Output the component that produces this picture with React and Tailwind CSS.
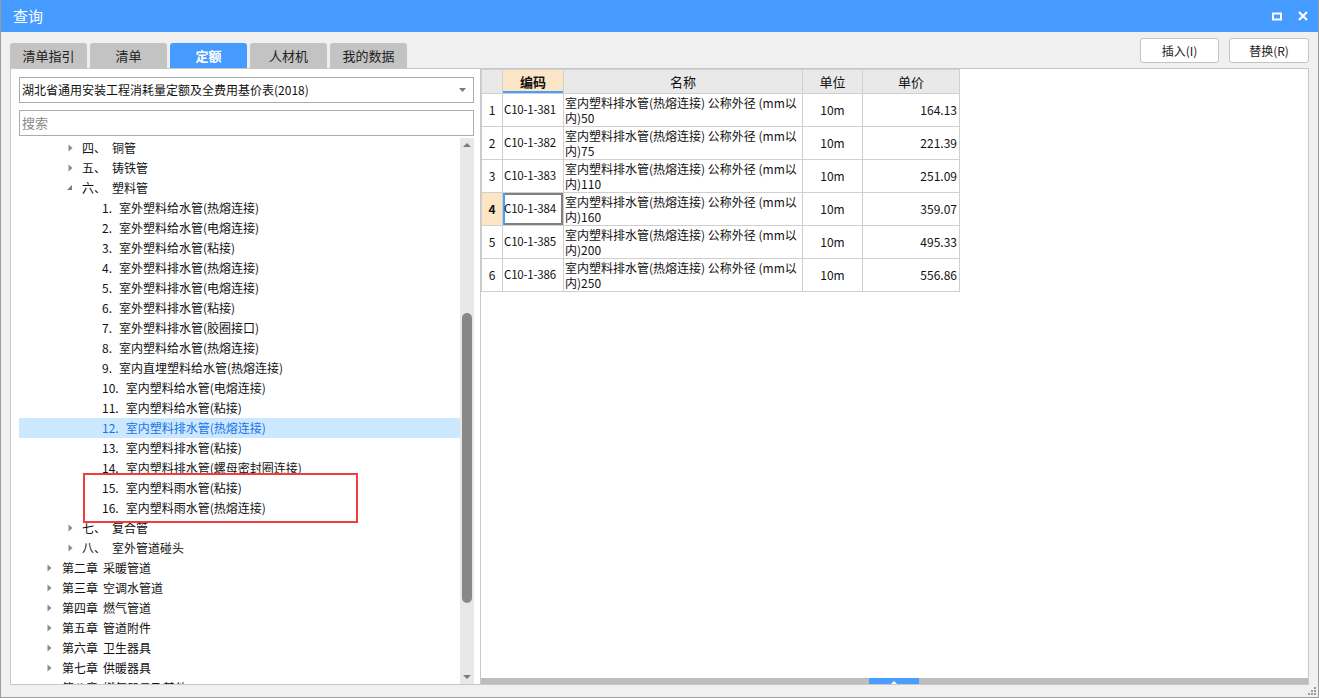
import React from 'react'

const FONT = { fontFamily: '"Noto Sans CJK SC", "Noto Sans", sans-serif' }

const tabs = ['清单指引', '清单', '定额', '人材机', '我的数据']

const tree = [
  { level: 2, arrow: 'right', no: '四、', text: '铜管' },
  { level: 2, arrow: 'right', no: '五、', text: '铸铁管' },
  { level: 2, arrow: 'down', no: '六、', text: '塑料管' },
  { level: 3, no: '1.', text: '室外塑料给水管(热熔连接)' },
  { level: 3, no: '2.', text: '室外塑料给水管(电熔连接)' },
  { level: 3, no: '3.', text: '室外塑料给水管(粘接)' },
  { level: 3, no: '4.', text: '室外塑料排水管(热熔连接)' },
  { level: 3, no: '5.', text: '室外塑料排水管(电熔连接)' },
  { level: 3, no: '6.', text: '室外塑料排水管(粘接)' },
  { level: 3, no: '7.', text: '室外塑料排水管(胶圈接口)' },
  { level: 3, no: '8.', text: '室内塑料给水管(热熔连接)' },
  { level: 3, no: '9.', text: '室内直埋塑料给水管(热熔连接)' },
  { level: 3, no: '10.', text: '室内塑料给水管(电熔连接)' },
  { level: 3, no: '11.', text: '室内塑料给水管(粘接)' },
  { level: 3, no: '12.', text: '室内塑料排水管(热熔连接)', selected: true },
  { level: 3, no: '13.', text: '室内塑料排水管(粘接)' },
  { level: 3, no: '14.', text: '室内塑料排水管(螺母密封圈连接)' },
  { level: 3, no: '15.', text: '室内塑料雨水管(粘接)' },
  { level: 3, no: '16.', text: '室内塑料雨水管(热熔连接)' },
  { level: 2, arrow: 'right', no: '七、', text: '复合管' },
  { level: 2, arrow: 'right', no: '八、', text: '室外管道碰头' },
  { level: 1, arrow: 'right', no: '第二章', text: '采暖管道' },
  { level: 1, arrow: 'right', no: '第三章', text: '空调水管道' },
  { level: 1, arrow: 'right', no: '第四章', text: '燃气管道' },
  { level: 1, arrow: 'right', no: '第五章', text: '管道附件' },
  { level: 1, arrow: 'right', no: '第六章', text: '卫生器具' },
  { level: 1, arrow: 'right', no: '第七章', text: '供暖器具' },
  { level: 1, arrow: 'right', no: '第八章', text: '燃气器具及其他' },
]

const rows = [
  { code: 'C10-1-381', size: '50', price: '164.13' },
  { code: 'C10-1-382', size: '75', price: '221.39' },
  { code: 'C10-1-383', size: '110', price: '251.09' },
  { code: 'C10-1-384', size: '160', price: '359.07', active: true },
  { code: 'C10-1-385', size: '200', price: '495.33' },
  { code: 'C10-1-386', size: '250', price: '556.86' },
]

function Arrow({ dir }) {
  if (dir === 'down') {
    return (
      <svg width="6" height="6" viewBox="0 0 6 6" className="shrink-0">
        <path d="M5 0 L5 5 L0 5 Z" fill="#7a7a7a" />
      </svg>
    )
  }
  return (
    <svg width="5" height="8" viewBox="0 0 5 8" className="shrink-0">
      <path d="M0.5 0.5 L4.5 4 L0.5 7.5 Z" fill="#8a8a8a" />
    </svg>
  )
}

function TreeRow({ item }) {
  const base = 'flex h-5 items-center text-[12px] whitespace-nowrap'
  const color = item.selected ? 'bg-[#cce8ff] text-[#1a73e8]' : 'text-[#111]'
  if (item.level === 1) {
    return (
      <div className={`${base} ${color}`}>
        <div className="w-[28px] shrink-0" />
        <Arrow dir={item.arrow} />
        <span className="ml-[10px]">{item.no}</span>
        <span className="ml-[5px]">{item.text}</span>
      </div>
    )
  }
  if (item.level === 2) {
    return (
      <div className={`${base} ${color}`}>
        <div className="w-[48px] shrink-0" />
        <div className="flex w-[6px] shrink-0 items-center justify-center">
          <Arrow dir={item.arrow} />
        </div>
        <span className="ml-[9px] w-[30px]">{item.no}</span>
        <span>{item.text}</span>
      </div>
    )
  }
  return (
    <div className={`${base} ${color}`}>
      <span className="ml-[83px]">{item.no}</span>
      <span className="ml-[7px]">{item.text}</span>
    </div>
  )
}

function LeftPanel() {
  return (
    <div className="relative flex w-[471px] flex-col border border-[#c8c8c8] bg-white pl-[8px]">
      <div className="mt-[8px] flex h-[26px] w-[455px] items-center justify-between border border-[#ababab] bg-white pl-[2px] pr-[7px] text-[12px] text-[#111]">
        <span>湖北省通用安装工程消耗量定额及全费用基价表(2018)</span>
        <svg width="7" height="4" viewBox="0 0 7 4">
          <path d="M0 0 L7 0 L3.5 4 Z" fill="#7a7a7a" />
        </svg>
      </div>
      <div className="mt-[7px] flex h-[26px] w-[455px] items-center border border-[#ababab] bg-white pl-[2px] text-[13px] text-[#8a8a8a]">
        搜索
      </div>
      <div className="mt-[2px] flex min-h-0 flex-1">
        <div className="w-[441px] overflow-hidden">
          {tree.map((t, i) => (
            <TreeRow key={i} item={t} />
          ))}
        </div>
        <div className="flex w-[14px] flex-col items-center bg-[#e8e8e8]">
          <svg width="14" height="16" viewBox="0 0 14 16">
            <path d="M3 9 L7 5 L11 9 Z" fill="#7a7a7a" />
          </svg>
          <div className="mt-[159px] h-[290px] w-[10px] rounded-full bg-[#888]" />
          <div className="flex-1" />
          <svg width="14" height="12" viewBox="0 0 14 12">
            <path d="M3 3 L11 3 L7 7 Z" fill="#7a7a7a" />
          </svg>
        </div>
      </div>
      <div className="pointer-events-none absolute left-[72px] top-[404px] h-[50px] w-[275px] border-2 border-[#f23d3d]" />
    </div>
  )
}

function RightPanel() {
  return (
    <div className="flex flex-1 flex-col border border-l-0 border-[#c8c8c8] bg-white">
      <div className="flex-1">
        <table className="table-fixed border-collapse text-[12px] text-[#111]">
          <colgroup>
            <col className="w-[21px]" />
            <col className="w-[61px]" />
            <col className="w-[239px]" />
            <col className="w-[60px]" />
            <col className="w-[97px]" />
          </colgroup>
          <thead>
            <tr className="h-[24px] bg-[#e9e9e9] text-[13px]">
              <th className="border border-[#cfcfcf] font-normal" />
              <th className="border border-[#cfcfcf] bg-[#fde6c6] font-bold shadow-[inset_0_-2px_0_#4a9cff]">编码</th>
              <th className="border border-[#cfcfcf] font-normal">名称</th>
              <th className="border border-[#cfcfcf] font-normal">单位</th>
              <th className="border border-[#cfcfcf] font-normal">单价</th>
            </tr>
          </thead>
          <tbody>
            {rows.map((r, i) => (
              <tr key={r.code} className="h-[33px]">
                <td
                  className={`border border-[#cfcfcf] text-center ${r.active ? 'bg-[#fde6c6] font-bold' : ''}`}
                >
                  {i + 1}
                </td>
                <td
                  className={`overflow-hidden border border-[#cfcfcf] px-[1px] text-[11.5px] tracking-[-0.2px] whitespace-nowrap ${
                    r.active ? 'shadow-[inset_2px_0_0_#4a9cff,inset_0_0_0_2px_#808080]' : ''
                  }`}
                >
                  {r.code}
                </td>
                <td className="overflow-hidden border border-[#cfcfcf] px-[1px] leading-[15px] whitespace-nowrap">
                  <div>室内塑料排水管(热熔连接) 公称外径 (mm以</div>
                  <div>内){r.size}</div>
                </td>
                <td className="border border-[#cfcfcf] text-center">10m</td>
                <td className="border border-[#cfcfcf] pr-[2px] text-right">{r.price}</td>
              </tr>
            ))}
          </tbody>
        </table>
      </div>
      <div className="relative h-[6px] bg-[#bdbdbd]">
        <div className="absolute left-[388px] top-0 flex h-[6px] w-[50px] items-end justify-center bg-[#4a9cff]">
          <svg width="6" height="4" viewBox="0 0 6 4">
            <path d="M0 4 L3 1 L6 4 Z" fill="#fff" />
          </svg>
        </div>
      </div>
    </div>
  )
}

export default function App() {
  return (
    <div
      className="relative flex h-[698px] w-[1319px] flex-col overflow-hidden border-x border-b border-[#9c9c9c] bg-[#f0f0f0]"
      style={FONT}
    >
      <div className="flex h-[32px] shrink-0 items-center justify-between bg-[#459bff] pl-[12px] pr-[10px] text-white">
        <span className="text-[15px]">查询</span>
        <div className="flex items-center gap-[16px]">
          <svg width="10" height="9" viewBox="0 0 10 9">
            <rect x="1" y="1.5" width="8" height="6" fill="none" stroke="#fff" strokeWidth="2" />
          </svg>
          <svg width="10" height="10" viewBox="0 0 10 10">
            <path d="M1 1 L9 9 M9 1 L1 9" stroke="#fff" strokeWidth="2.2" />
          </svg>
        </div>
      </div>
      <div className="flex h-[36px] shrink-0 items-end justify-between px-[9px]">
        <div className="flex gap-[3px]">
          {tabs.map((t) => (
            <div
              key={t}
              className={`flex h-[25px] w-[77px] items-center justify-center rounded-t-[3px] text-[13px] ${
                t === '定额' ? 'bg-[#459bff] font-bold text-white' : 'bg-[#c3c3c3] text-[#222]'
              }`}
            >
              {t}
            </div>
          ))}
        </div>
        <div className="mb-[5px] flex gap-[10px]">
          <button className="h-[25px] w-[79px] rounded-[3px] border border-[#c4c4c4] bg-white text-[12px] text-[#222]">
            插入(I)
          </button>
          <button className="h-[25px] w-[80px] rounded-[3px] border border-[#c4c4c4] bg-white text-[12px] text-[#222]">
            替换(R)
          </button>
        </div>
      </div>
      <div className="flex h-[617px] shrink-0 px-[9px]">
        <LeftPanel />
        <RightPanel />
      </div>
      <div className="absolute bottom-[2px] right-[2px] grid grid-cols-3 gap-[1px]">
        {[0, 0, 1, 0, 1, 1, 1, 1, 1].map((v, i) => (
          <div key={i} className={`h-[2px] w-[2px] ${v ? 'bg-[#9a9a9a]' : ''}`} />
        ))}
      </div>
    </div>
  )
}
